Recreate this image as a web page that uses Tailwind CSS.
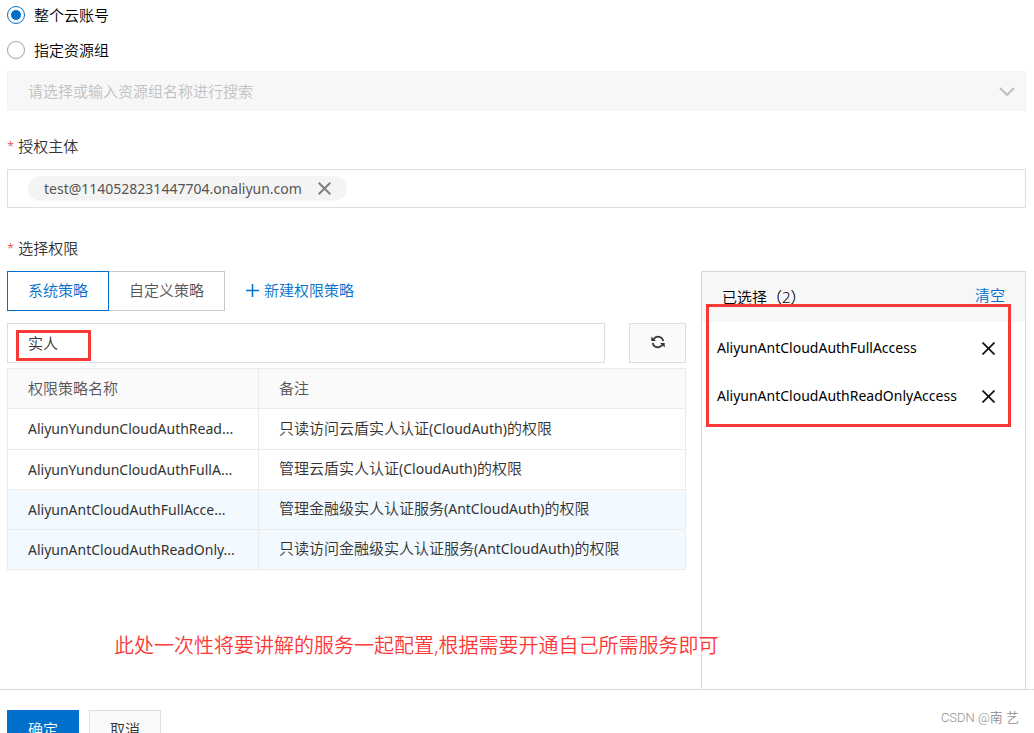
<!DOCTYPE html>
<html lang="zh-CN">
<head>
<meta charset="utf-8">
<title>添加权限</title>
<script src="https://cdn.jsdelivr.net/npm/@tailwindcss/browser@4"></script>
</head>
<body class="flex h-screen flex-col overflow-hidden bg-white font-['Noto_Sans','Noto_Sans_CJK_SC',sans-serif] text-[15px] leading-5 font-[350] text-[#333]">
<main class="flex min-h-0 flex-1 flex-col px-[7px] pr-2">
  <div class="mt-[5px] flex flex-col gap-[15px] text-black">
    <label class="flex items-center gap-[9px]">
      <input type="radio" name="scope" checked class="size-[18px] appearance-none rounded-full border border-[#0070cc] bg-white bg-clip-content p-[3px] checked:bg-[#0070cc]">整个云账号</label>
    <label class="flex items-center gap-[9px]">
      <input type="radio" name="scope" class="size-[18px] appearance-none rounded-full border border-[#a0a0a0] bg-white">指定资源组</label>
  </div>
  <div class="relative mt-[11px]">
    <select disabled aria-label="资源组" class="h-10 w-full appearance-none border border-[#f3f3f3] bg-[#f7f7f7] px-5 text-[#c1c1c1] opacity-100">
      <option>请选择或输入资源组名称进行搜索</option>
    </select>
    <svg class="pointer-events-none absolute top-4 right-[11px] h-[9px] w-4" viewBox="0 0 16 9" fill="none" stroke="#bfbfbf" stroke-width="2"><path d="M1 1l7 7 7-7"/></svg>
  </div>

  <div class="mt-[25px] flex gap-1"><span class="text-[13px] text-[#d93026]">*</span><span>授权主体</span></div>
  <div class="mt-[13px] flex h-[39px] items-center border border-[#dedede] px-5">
    <div class="flex h-[25px] items-center gap-4 rounded-full bg-[#f4f4f4] px-4 text-[#555]">
      <span class="text-[14px] font-normal">test@1140528231447704.onaliyun.com</span>
      <button type="button" aria-label="移除"><svg class="size-[13px]" viewBox="0 0 13 13" fill="none" stroke="#808080" stroke-width="2"><path d="M.7.7l11.6 11.6M12.3.7L.7 12.3"/></svg></button>
    </div>
  </div>

  <div class="mt-[30px] flex gap-1"><span class="text-[13px] text-[#d93026]">*</span><span>选择权限</span></div>
  <div class="mt-[13px] flex min-h-0 flex-1 gap-[15px]">
    <section class="flex min-w-0 flex-1 flex-col">
      <div class="flex items-center">
        <button type="button" class="h-10 border border-[#0070cc] px-5 pb-[2px] text-[#0070cc]">系统策略</button>
        <button type="button" class="h-10 border border-l-0 border-[#c8c8c8] px-5 pb-[2px] text-[#555]">自定义策略</button>
        <a href="#" class="ml-[21px] flex items-center gap-[5px] pb-[2px] text-[#0070cc]"><svg class="size-[13px]" viewBox="0 0 13 13" stroke="#0070cc" stroke-width="1.5"><path d="M0 6.5h13M6.5 0v13"/></svg>新建权限策略</a>
      </div>
      <div class="mt-3 flex gap-6">
        <div class="relative flex-1">
          <input type="text" value="实人" aria-label="搜索策略" class="h-10 w-full border border-[#dedede] px-5 pb-[2px] outline-none">
          <div class="pointer-events-none absolute top-[7px] left-[9px] h-[31px] w-[75px] border-3 border-[#fb3838]"></div>
        </div>
        <button type="button" aria-label="刷新" class="flex h-10 w-[57px] items-center justify-center border border-[#dedede] bg-[#fafafa] pb-[2px]">
          <svg class="size-[14px]" viewBox="0 0 14 14" fill="none" stroke="#333" stroke-width="1.7"><path d="M2.6 4.2A5.2 5.2 0 0 1 12.2 6.2M11.4 9.8A5.2 5.2 0 0 1 1.8 7.8"/><path d="M.3 1.4V6h4.6zM13.7 12.6V8H9.1z" fill="#333" stroke="none"/></svg>
        </button>
      </div>
      <table class="mt-[5px] w-full table-fixed border-collapse text-left">
        <colgroup><col class="w-[251px]"><col></colgroup>
        <thead>
          <tr class="h-10 bg-[#fafafa] text-[#555]"><th class="border border-[#ebebeb] px-5 pb-[2px] font-[350]">权限策略名称</th><th class="border border-[#ebebeb] px-5 pb-[2px] font-[350]">备注</th></tr>
        </thead>
        <tbody>
          <tr class="h-[41px]"><td class="border border-[#ebebeb] px-5 text-[14px] font-normal">AliyunYundunCloudAuthRead...</td><td class="border border-[#ebebeb] px-5 pb-[2px]">只读访问云盾实人认证<span class="text-[14px] font-normal">(CloudAuth)</span>的权限</td></tr>
          <tr class="h-10"><td class="border border-[#ebebeb] px-5 text-[14px] font-normal">AliyunYundunCloudAuthFullA...</td><td class="border border-[#ebebeb] px-5 pb-[2px]">管理云盾实人认证<span class="text-[14px] font-normal">(CloudAuth)</span>的权限</td></tr>
          <tr class="h-10 bg-[#f2f9ff]"><td class="border border-[#ebebeb] px-5 text-[14px] font-normal">AliyunAntCloudAuthFullAcce...</td><td class="border border-[#ebebeb] px-5 pb-[2px]">管理金融级实人认证服务<span class="text-[14px] font-normal">(AntCloudAuth)</span>的权限</td></tr>
          <tr class="h-10 bg-[#f2f9ff]"><td class="border border-[#ebebeb] px-5 text-[14px] font-normal">AliyunAntCloudAuthReadOnly...</td><td class="border border-[#ebebeb] px-5 pb-[2px]">只读访问金融级实人认证服务<span class="text-[14px] font-normal">(AntCloudAuth)</span>的权限</td></tr>
        </tbody>
      </table>
      <p class="relative z-10 mt-[61px] ml-[107px] text-xl leading-[30px] whitespace-nowrap text-[#fb3838]">此处一次性将要讲解的服务一起配置,根据需要开通自己所需服务即可</p>
    </section>
    <aside class="relative w-[325px] border border-b-0 border-[#d8d8d8] text-black">
      <div class="flex h-[50px] items-center justify-between bg-[#f7f7f7] px-5">
        <span>已选择（2）</span><a href="#" class="pb-1 text-[#0070cc]">清空</a>
      </div>
      <ul class="pt-[2px] text-[14px] font-normal">
        <li class="flex h-12 items-center justify-between pr-[30px] pl-[15px]">AliyunAntCloudAuthFullAccess<button type="button" aria-label="移除"><svg class="size-[13px]" viewBox="0 0 13 13" fill="none" stroke="#111" stroke-width="1.7"><path d="M.5.5l12 12M12.5.5l-12 12"/></svg></button></li>
        <li class="flex h-12 items-center justify-between pr-[30px] pl-[15px]">AliyunAntCloudAuthReadOnlyAccess<button type="button" aria-label="移除"><svg class="size-[13px]" viewBox="0 0 13 13" fill="none" stroke="#111" stroke-width="1.7"><path d="M.5.5l12 12M12.5.5l-12 12"/></svg></button></li>
      </ul>
      <div class="pointer-events-none absolute top-8 right-[14px] left-1 h-[123px] border-3 border-[#fb3838]"></div>
    </aside>
  </div>
</main>
<footer class="flex h-11 shrink-0 items-start justify-between border-t border-[#d8d8d8] pr-[15px] pl-[7px]">
  <div class="flex gap-[10px] pt-5">
    <button type="button" class="h-10 w-[72px] bg-[#0070cc] pb-[2px] text-white">确定</button>
    <button type="button" class="h-10 w-[72px] border border-[#dedede] bg-[#fafafa] pb-[2px]">取消</button>
  </div>
  <span class="pt-[18px] font-[Roboto,'Noto_Sans_CJK_SC',sans-serif] text-[13px] text-[#909090]">CSDN @南 艺</span>
</footer>
</body>
</html>
